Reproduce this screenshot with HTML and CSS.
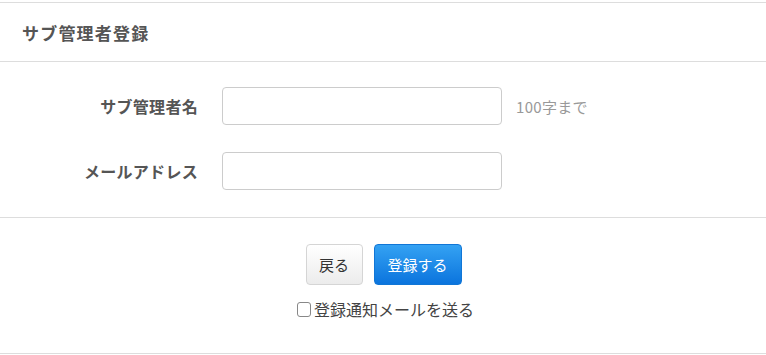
FILE: index.html
```html
<!DOCTYPE html>
<html lang="ja">
<head>
<meta charset="utf-8">
<link rel="stylesheet" href="styles.css">
</head>
<body>
<div class="panel">
  <div class="panel-header">
    <h2 class="panel-title">サブ管理者登録</h2>
  </div>
  <div class="panel-body">
    <div class="form-row">
      <label class="form-label">サブ管理者名</label>
      <input class="form-input" type="text">
      <span class="form-note">100字まで</span>
    </div>
    <div class="form-row">
      <label class="form-label">メールアドレス</label>
      <input class="form-input" type="text">
    </div>
  </div>
  <div class="panel-footer">
    <div class="btn-row">
      <button class="btn btn-default" type="button">戻る</button>
      <button class="btn btn-primary" type="button">登録する</button>
    </div>
    <label class="check-row">
      <span class="check-box"></span>
      <span class="check-text">登録通知メールを送る</span>
    </label>
  </div>
</div>
</body>
</html>
```
FILE: styles.css
```css
html, body {
  margin: 0;
  padding: 0;
  background: #fff;
}
body {
  padding-top: 2px;
  font-family: "Noto Sans CJK JP", "Noto Sans", sans-serif;
  color: #555;
}
.panel {
  border-top: 1px solid #ddd;
  border-bottom: 1px solid #ddd;
  margin: 0 -1px;
}
.panel-header {
  height: 58px;
  display: flex;
  align-items: center;
  padding-left: 23px;
  border-bottom: 1px solid #ddd;
}
.panel-title {
  margin: 0;
  font-size: 17px;
  font-weight: bold;
  color: #555;
  letter-spacing: 1.2px;
}
.panel-body {
  padding: 25px 0 27px;
  display: flex;
  flex-direction: column;
  gap: 27px;
  border-bottom: 1px solid #ddd;
}
.form-row {
  display: flex;
  align-items: center;
}
.form-label {
  width: 199px;
  text-align: right;
  font-size: 16px;
  font-weight: bold;
  color: #555;
  margin-right: 24px;
  letter-spacing: 0.3px;
}
.form-input {
  box-sizing: border-box;
  width: 280px;
  height: 38px;
  border: 1px solid #ccc;
  border-radius: 4px;
  margin: 0;
  padding: 6px 10px;
  font-size: 14px;
  background: #fff;
}
.form-note {
  margin-left: 14px;
  font-size: 15px;
  color: #999;
  letter-spacing: 0.3px;
}
.panel-footer {
  padding: 26px 0 32px;
  display: flex;
  flex-direction: column;
  align-items: center;
}
.btn-row {
  display: flex;
  gap: 11px;
  margin-left: 1px;
}
.btn {
  box-sizing: border-box;
  height: 41px;
  border-radius: 4px;
  font-family: inherit;
  font-size: 15px;
  padding: 0;
  cursor: pointer;
}
.btn-default {
  width: 57px;
  border: 1px solid #d5d5d5;
  background: linear-gradient(#ffffff, #ececec);
  color: #333;
}
.btn-primary {
  width: 88px;
  border: 1px solid #1176d6;
  background: linear-gradient(#34a2f3, #0b74dd);
  color: #fff;
}
.check-row {
  display: flex;
  align-items: center;
  margin-top: 12px;
  margin-left: 5px;
  gap: 3px;
}
.check-box {
  box-sizing: border-box;
  width: 14px;
  height: 15px;
  border: 1px solid #888;
  border-radius: 3px;
  background: #fff;
}
.check-text {
  font-size: 16px;
  color: #444;
}
```
